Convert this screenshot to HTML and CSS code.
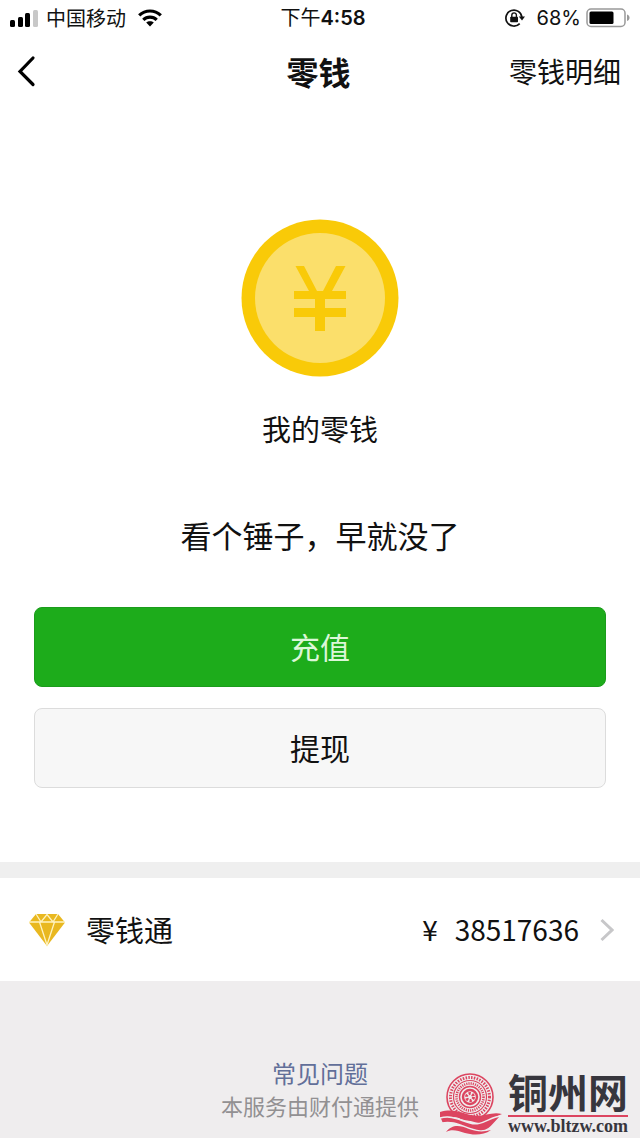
FILE: index.html
```html
<!DOCTYPE html>
<html lang="zh-CN">
<head>
<meta charset="utf-8">
<meta name="viewport" content="width=device-width, initial-scale=1">
<title>零钱</title>
<link rel="stylesheet" href="styles.css">
</head>
<body>
<div class="status-bar">
  <div class="status-side">
    <svg class="signal" width="28" height="18" viewBox="0 0 28 18" aria-hidden="true">
      <rect x="0" y="11" width="5" height="7" rx="1.5"/>
      <rect x="8" y="8" width="5" height="10" rx="1.5"/>
      <rect x="15" y="4" width="5" height="14" rx="1.5"/>
      <rect x="23" y="1" width="5" height="17" rx="1.5" fill="#c8c8c8"/>
    </svg>
    <span>中国移动</span>
    <svg class="wifi" width="24" height="18" viewBox="0 0 24 18" fill="none" stroke="#000" stroke-width="3.2" aria-hidden="true">
      <path d="M1.2 6.4C7.3.5 16.7.5 22.8 6.4"/>
      <path d="M5.3 10.8C9 7.2 15 7.2 18.7 10.8"/>
      <path d="M12 17.5 8.2 13.6C10.2 11.7 13.8 11.7 15.8 13.6Z" fill="#000" stroke="none"/>
    </svg>
  </div>
  <div class="clock">下午<b>4:58</b></div>
  <div class="status-side status-right">
    <svg width="20" height="18" viewBox="0 0 20 18" fill="none" stroke="#111" stroke-width="1.7" aria-hidden="true">
      <path d="M14.7 14.6A8 8 0 1 1 16.9 8.4"/>
      <path d="M13.8 7.6H20L17 11.6Z" fill="#111" stroke="none"/>
      <rect x="5.2" y="7.8" width="7.8" height="5.4" rx=".8" fill="#111" stroke="none"/>
      <path d="M6.8 8V6.2a2.3 2.3 0 0 1 4.6 0V8" stroke-width="1.4"/>
    </svg>
    <span class="percent">68%</span>
    <svg width="44" height="20" viewBox="0 0 44 20" aria-hidden="true">
      <rect x="1" y="1" width="38" height="17.5" rx="4" fill="none" stroke="#999" stroke-width="1.5"/>
      <rect x="3.5" y="3.5" width="24" height="12.5" rx="1.5"/>
      <path d="M41 6.5c3.4 1 3.4 5.500 0 6.500Z" fill="#999"/>
    </svg>
  </div>
</div>
<header class="nav">
  <button class="back" type="button" aria-label="返回">
    <svg width="20" height="32" viewBox="0 0 20 32" fill="none" stroke="#000" stroke-width="3.2" stroke-linecap="round" aria-hidden="true"><path d="M17 3 4 16.500 17 29.500"/></svg>
  </button>
  <h1 class="title">零钱</h1>
  <a class="details" href="#details">零钱明细</a>
</header>
<main>
  <section class="balance">
    <svg class="coin" width="158" height="158" viewBox="0 0 158 158" aria-hidden="true">
      <circle cx="79" cy="79" r="78.500" fill="#f9ca08"/>
      <circle cx="79" cy="79" r="65" fill="#fbdf6b"/>
      <path d="M54.500 47H63L76 72H82L95 47H104.500L91 72H105V80H84V89H105V98H84V112H74V98H53V89H74V80H53V72H68Z" fill="#f9ca08"/>
    </svg>
    <p class="label">我的零钱</p>
    <p class="message">看个锤子，早就没了</p>
    <div class="actions">
      <button class="btn btn-primary" type="button">充值</button>
      <button class="btn btn-plain" type="button">提现</button>
    </div>
  </section>
  <a class="fund" href="#fund">
    <svg width="36" height="34" viewBox="0 0 36 34" aria-hidden="true">
      <path d="M7 1H29L36 9.500 18 33 0 9.500Z" fill="#e9b820"/>
      <path d="M0 9H36M7 1 12 9 18 1.500 24 9 29 1M10.500 9 18 32 25.500 9" fill="none" stroke="#fff3c0" stroke-width="1.300"/>
    </svg>
    <span class="fund-name">零钱通</span>
    <span class="fund-amount"><span>¥</span><span>38517636</span></span>
    <svg width="14" height="24" viewBox="0 0 14 24" fill="none" stroke="#c7c7c9" stroke-width="3" aria-hidden="true"><path d="M1.500 2 12 12 1.500 22"/></svg>
  </a>
</main>
<footer class="footer">
  <a class="faq" href="#faq">常见问题</a>
  <p class="provider">本服务由财付通提供</p>
  <div class="mark">
    <svg width="64" height="62" viewBox="0 0 64 62" fill="none" aria-hidden="true">
      <g stroke="#dc4560">
        <circle cx="31" cy="24" r="23" stroke-width="1.600"/>
        <circle cx="31" cy="24" r="19.500" stroke-width="3" stroke-dasharray="1.500 1.300"/>
        <circle cx="31" cy="24" r="16.500" stroke-width="1.200"/>
        <circle cx="31" cy="24" r="13.500" stroke-width="2.600" stroke-dasharray="1.200 1"/>
        <circle cx="31" cy="24" r="10.500" stroke-width="1.400"/>
        <circle cx="31" cy="24" r="7" stroke-width="2.400"/>
        <circle cx="31" cy="24" r="3.500" stroke-width="3" stroke-dasharray="2.200 1.460"/>
      </g>
      <path d="M1 39C14 35 23 40 32 42 43 45 52 38 63 41 56 43 51 51 40 50 27 48 17 41 1 45Z" fill="#dc4560"/>
      <path d="M1 45C13 42 20 47 31 50 43 54 51 43 63 43 56 47 52 59 41 58 26 56 17 47 3 50Z" fill="#dc4560" stroke="#efedf0" stroke-width="1.500"/>
      <path d="M7 59C13 51 21 52 30 56 38 59 45 59 52 57 44 63 33 62 26 60 18 57 12 56 7 59Z" fill="#dc4560"/>
    </svg>
    <div class="mark-text">
      <span class="mark-name">铜州网</span>
      <span class="mark-url">www.bltzw.com</span>
    </div>
  </div>
</footer>
</body>
</html>
```
FILE: styles.css
```css
* { box-sizing: border-box; }

body {
  margin: 0;
  min-height: 100vh;
  display: flex;
  flex-direction: column;
  background: #fff;
  color: #111;
  font-family: "Noto Sans CJK SC", sans-serif;
}

h1, p { margin: 0; }
a { color: inherit; text-decoration: none; }
button { font-family: inherit; cursor: pointer; }
svg { display: block; flex: none; }

.status-bar {
  display: grid;
  grid-template-columns: 1fr auto 1fr;
  align-items: center;
  height: 34px;
  padding: 0 10px;
  font-size: 20px;
  line-height: 34px;
}

.status-side { display: flex; align-items: center; }
.signal { margin-right: 8px; }
.wifi { margin-left: 12px; }
.status-right { justify-content: flex-end; }
.percent {
  margin: 0 5px 0 12px;
  font-family: Inter, sans-serif;
}
.clock { padding-left: 6px; }
.clock b { font-family: Inter, sans-serif; font-weight: 600; }

.nav {
  display: grid;
  grid-template-columns: 1fr auto 1fr;
  align-items: center;
  height: 74px;
  padding: 0 19px 0 16px;
}

.back {
  justify-self: start;
  padding: 0;
  border: 0;
  background: none;
}
.title { font-size: 32px; line-height: 40px; font-weight: 700; }
.details { justify-self: end; font-size: 28px; line-height: 40px; }

.balance {
  display: flex;
  flex-direction: column;
  align-items: center;
  padding: 111px 34px 74px;
}
.label { margin-top: 31px; font-size: 29px; line-height: 40px; }
.message { margin-top: 67px; font-size: 31px; line-height: 40px; }

.actions {
  display: grid;
  gap: 21px;
  width: 100%;
  margin-top: 52px;
}
.btn {
  height: 80px;
  padding: 0 0 2px;
  border-radius: 8px;
  font-size: 30px;
  line-height: 40px;
}
.btn-primary { border: 1px solid #1b9c1c; background: #1dac1b; color: #dcf7d8; }
.btn-plain { border: 1px solid #dcdcdc; background: #f7f7f7; color: #111; }

.fund {
  display: flex;
  align-items: center;
  min-height: 119px;
  padding: 0 26px 0 29px;
  border-top: 16px solid #efefef;
}
.fund-name,
.fund-amount { padding-bottom: 2px; }
.fund-name { margin-left: 21px; font-size: 29px; }
.fund-amount {
  display: flex;
  gap: 17px;
  margin: 0 21px 0 auto;
  font-size: 28px;
}

.footer {
  position: relative;
  flex: 1;
  display: flex;
  flex-direction: column;
  align-items: center;
  padding: 76px 0 16px;
  background: #efedee;
  text-align: center;
}
.faq { color: #626f99; font-size: 24px; line-height: 32px; }
.provider { color: #929092; font-size: 22px; line-height: 32px; }

.mark {
  position: absolute;
  right: 12px;
  bottom: 3px;
  display: flex;
  align-items: flex-end;
  gap: 5px;
}
.mark-text {
  display: flex;
  flex-direction: column;
  color: #37363d;
}
.mark-name {
  border-bottom: 2px solid #dc4560;
  font-size: 40px;
  font-weight: 700;
  line-height: 48px;
}
.mark-url {
  font-family: "Liberation Serif", serif;
  font-size: 18px;
  font-weight: 700;
  line-height: 18px;
}
```
